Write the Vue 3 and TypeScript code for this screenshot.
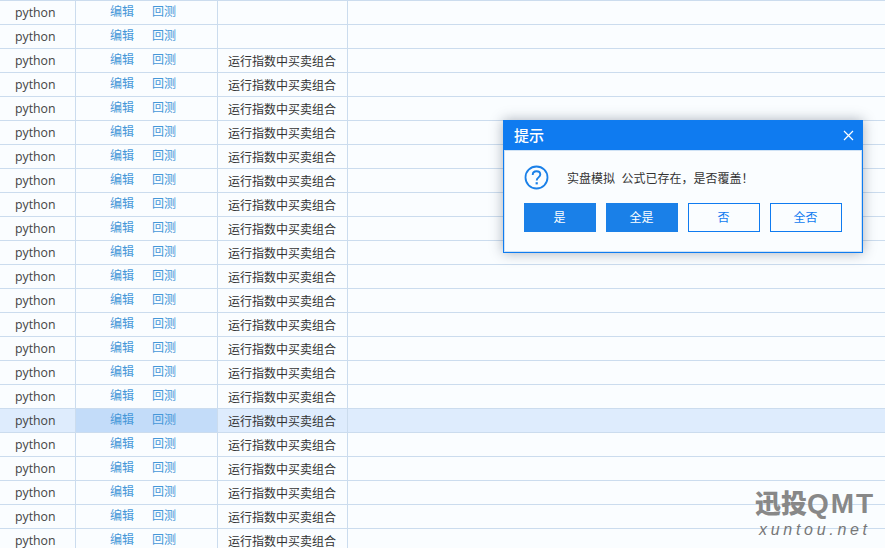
<script setup lang="ts">
interface Row { strategy: string; active: boolean }
const rows: Row[] = Array.from({ length: 23 }, (_, i) => ({
  strategy: i < 2 ? '' : '运行指数中买卖组合',
  active: i === 17,
}))
const buttons = [
  { label: '是', primary: true },
  { label: '全是', primary: true },
  { label: '否', primary: false },
  { label: '全否', primary: false },
]
</script>

<template>
  <div class="page">
    <div class="table">
      <div v-for="(r, i) in rows" :key="i" class="row" :class="{ active: r.active }">
        <div class="cell lang">python</div>
        <div class="cell ops"><a>编辑</a><a>回测</a></div>
        <div class="cell strategy">{{ r.strategy }}</div>
        <div class="cell rest"></div>
      </div>
    </div>

    <div class="dialog">
      <div class="title">
        <span>提示</span>
        <svg class="close" width="11" height="11" viewBox="0 0 11 11"><path d="M1 1l9 9M10 1l-9 9" stroke="#fff" stroke-width="1.2" fill="none" /></svg>
      </div>
      <div class="body">
        <div class="msg">
          <svg width="25" height="25" viewBox="0 0 25 25">
            <circle cx="12.5" cy="12.5" r="11" fill="none" stroke="#1a80e8" stroke-width="1.8" />
            <path d="M8.7 10c0-2.4 1.7-3.7 3.8-3.7s3.8 1.3 3.8 3.3c0 2.8-3.6 2.8-3.6 5.9" fill="none" stroke="#1a80e8" stroke-width="1.9" />
            <rect x="11.6" y="17.2" width="2.2" height="2.2" fill="#1a80e8" />
          </svg>
          <span class="msg-text">实盘模拟&nbsp; 公式已存在，是否覆盖！</span>
        </div>
        <div class="btns">
          <button v-for="b in buttons" :key="b.label" :class="b.primary ? 'primary' : 'plain'"><span>{{ b.label }}</span></button>
        </div>
      </div>
    </div>

    <div class="mark">
      <div class="m1">迅投<span class="qmt">QMT</span></div>
      <div class="m2">xuntou.net</div>
    </div>
  </div>
</template>

<style>
html, body { margin: 0; background: #fafcff; overflow: hidden; }
</style>

<style scoped>
.page {
  position: relative;
  width: 885px;
  height: 548px;
  overflow: hidden;
  background: #fafdff;
  font-family: "Noto Sans CJK SC", "Liberation Sans", sans-serif;
  color: #333;
}
.table { display: flex; flex-direction: column; }
.row {
  display: flex;
  height: 24px;
  box-sizing: border-box;
  border-top: 1px solid #cbdcee;
  font-size: 12px;
}
.row.active { background: #deecfd; }
.cell {
  box-sizing: border-box;
  height: 23px;
  border-right: 1px solid #cbdcee;
  line-height: 23px;
  white-space: nowrap;
}
.lang {
  width: 76px;
  padding-left: 15px;
  line-height: 24px;
  font-family: "Open Sans", "Liberation Sans", sans-serif;
  font-size: 12.3px;
  color: #444;
}
.ops {
  width: 142px;
  padding-left: 34px;
  display: flex;
  gap: 18px;
  line-height: 20px;
  color: #4597d8;
}
.active .ops { background: #c3dcf9; }
.strategy { width: 130px; padding-left: 10px; }
.rest { flex: 1; border-right: none; }

.dialog {
  position: absolute;
  left: 503px;
  top: 120px;
  width: 360px;
  height: 133px;
  box-sizing: border-box;
  border: 1px solid #0f7cf0;
  background: #fafdff;
  box-shadow: 0 0 12px rgba(50, 60, 80, 0.4);
  display: flex;
  flex-direction: column;
}
.title {
  height: 29px;
  flex: none;
  background: #0f7bf0;
  color: #fff;
  font-size: 15px;
  font-weight: 500;
  padding: 0 8px 2px 10px;
  box-sizing: border-box;
  display: flex;
  align-items: center;
  justify-content: space-between;
}
.close { margin-top: 2px; }
.body {
  flex: 1;
  border: 1px solid #cfe2f5;
  padding: 14px 19px 0;
}
.msg {
  display: flex;
  align-items: center;
  gap: 18px;
  height: 25px;
  font-size: 12px;
  color: #333;
}
.msg-text { margin-top: -1px; word-spacing: 0.5px; }
.btns {
  display: flex;
  gap: 10px;
  margin-top: 13px;
}
.btns button {
  width: 72px;
  height: 29px;
  padding: 0 1px 2px 0;
  box-sizing: border-box;
  font: 12px "Noto Sans CJK SC", sans-serif;
}
.primary { background: #1a80e8; border: none; color: #fff; }
.plain { background: #fafdff; border: 1px solid #0f7bf0; color: #0f7bf0; }

.mark {
  position: absolute;
  left: 755px;
  top: 485px;
  width: 125px;
  color: #888;
}
.m1 {
  height: 33px;
  font-size: 26px;
  line-height: 33px;
  font-weight: 900;
  white-space: nowrap;
  font-family: "Noto Sans CJK SC", "Liberation Sans", sans-serif;
}
.qmt {
  font-family: "Liberation Sans", sans-serif;
  font-weight: 700;
  font-size: 28px;
  letter-spacing: 2px;
}
.m2 {
  margin-top: 2px;
  font-family: "Liberation Sans", sans-serif;
  font-style: italic;
  font-size: 16px;
  line-height: 20px;
  letter-spacing: 3.7px;
  color: #777;
  padding-left: 4px;
  white-space: nowrap;
}
</style>
